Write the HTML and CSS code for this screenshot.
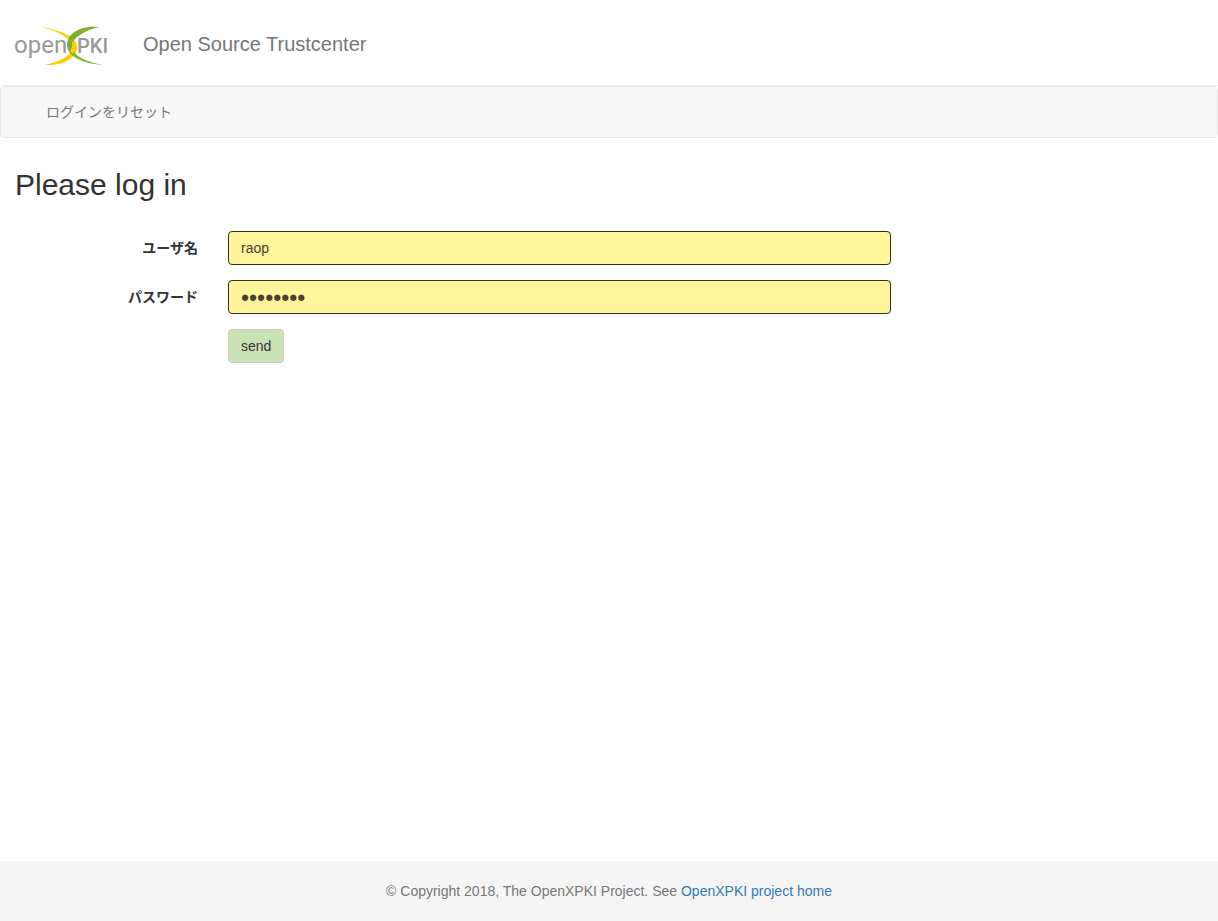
FILE: index.html
```html
<!DOCTYPE html>
<html lang="ja">
<head>
<meta charset="utf-8">
<meta name="viewport" content="width=device-width, initial-scale=1">
<title>OpenXPKI</title>
<link rel="stylesheet" href="styles.css">
</head>
<body>
<header class="header">
  <svg class="logo" width="92" height="40" viewBox="0 0 92 40" role="img" aria-label="OpenXPKI">
    <text class="logo-open" x="-1" y="27">open</text>
    <path fill="#fc0" d="M26 1C46 4 62 11 62 21C62 32 48 40 29 39C45 36 57 30 57 21C57 12 43 5 26 1Z"/>
    <path fill="#80b02d" d="M85 1C70 4 57 12 57 20C57 29 70 36 89 39C68 38 52 30 52 19C52 7 66 -1 85 1Z"/>
    <path fill="#fc0" d="M57 15C61 18 61 24 58 28L55 25C57 22 58 19 57 15Z"/>
    <text class="logo-pki" x="62" y="27">PKI</text>
  </svg>
  <p class="tagline">Open Source Trustcenter</p>
</header>
<nav class="navbar">
  <a class="nav-link" href="#">ログインをリセット</a>
</nav>
<main class="content">
  <h2 class="title">Please log in</h2>
  <form class="login">
    <label class="label" for="username">ユーザ名</label>
    <input class="field" id="username" type="text" value="raop">
    <label class="label" for="password">パスワード</label>
    <input class="field field-secret" id="password" type="password" value="password">
    <button class="send" type="button">send</button>
  </form>
</main>
<footer class="footer">
  <p class="copyright">© Copyright 2018, The OpenXPKI Project. See <a class="home-link" href="#">OpenXPKI project home</a></p>
</footer>
</body>
</html>
```
FILE: styles.css
```css
* {
  box-sizing: border-box;
}

body {
  display: flex;
  flex-direction: column;
  min-height: 100vh;
  margin: 0;
  background: #fff;
  color: #333;
  font: 14px/20px "Liberation Sans", "Noto Sans CJK JP", sans-serif;
}

.header {
  display: flex;
  align-items: center;
  gap: 36px;
  padding: 26px 15px 19px;
  border-bottom: 1px solid #eee;
}

.logo {
  flex: none;
  overflow: visible;
}

.logo-open,
.logo-pki {
  font-family: Roboto, sans-serif;
  fill: #999;
}

.logo-open {
  font-size: 24px;
  font-weight: 400;
}

.logo-pki {
  font-size: 20px;
  font-weight: 500;
}

.tagline {
  margin: 0;
  padding-bottom: 4px;
  color: #777;
  font-size: 20px;
}

.navbar {
  display: flex;
  padding: 15px 45px;
  border: 1px solid #e7e7e7;
  border-radius: 4px;
  background: #f8f8f8;
}

.nav-link {
  color: #777;
  text-decoration: none;
}

.content {
  flex: 1;
  padding: 30px 15px;
}

.title {
  margin: 0 0 30px;
  font-size: 30px;
  font-weight: 500;
  line-height: 33px;
}

.login {
  display: grid;
  grid-template-columns: 2fr 7fr 3fr;
  row-gap: 15px;
}

.label {
  grid-column-start: 1;
  padding: 7px 15px 0 0;
  font-weight: 700;
  text-align: right;
}

.field {
  width: auto;
  min-width: 0;
  height: 34px;
  margin: 0 15px;
  padding: 6px 12px;
  border: 1px solid #332e20;
  border-radius: 4px;
  background: #fff59b;
  color: #4a4132;
  font: inherit;
}

.field-secret {
  padding-block: 2px 0;
  font-size: 23px;
}

.send {
  grid-column-start: 2;
  justify-self: start;
  margin-left: 15px;
  padding: 6px 12px;
  border: 1px solid #ccc;
  border-radius: 4px;
  background: #c8e2b3;
  color: #333;
  font: inherit;
}

.footer {
  padding: 20px 15px;
  background: #f5f5f5;
  text-align: center;
}

.copyright {
  margin: 0;
  color: #777;
}

.home-link {
  color: #337ab7;
  text-decoration: none;
}
```
